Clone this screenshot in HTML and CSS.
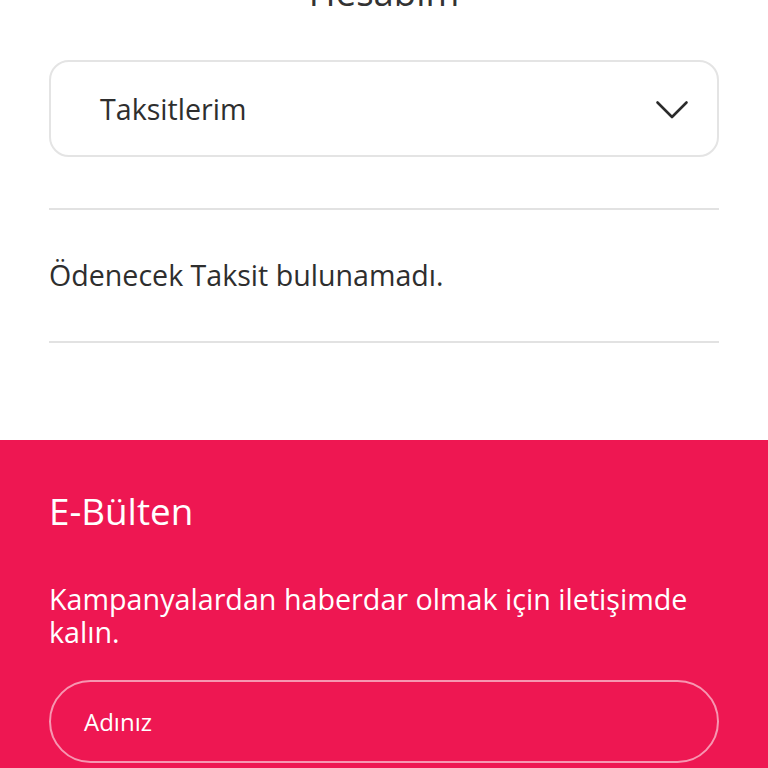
FILE: index.html
```html
<!DOCTYPE html>
<html lang="tr">
<head>
<meta charset="utf-8">
<title>Hesabım</title>
<link rel="stylesheet" href="styles.css">
</head>
<body>
<main class="account">
  <h1 class="title">Hesabım</h1>
  <div class="select">
    <span class="select-label">Taksitlerim</span>
    <svg class="chevron" width="34" height="20" viewBox="0 0 34 20" aria-hidden="true">
      <path d="M2.5 2.5 L17 17 L31.5 2.5" fill="none" stroke="#2b2b2b" stroke-width="2.6" stroke-linecap="round" stroke-linejoin="round"/>
    </svg>
  </div>
  <div class="message">Ödenecek Taksit bulunamadı.</div>
</main>
<footer class="newsletter">
  <h2 class="nl-title">E-Bülten</h2>
  <p class="nl-text">Kampanyalardan haberdar olmak için iletişimde kalın.</p>
  <div class="nl-input">Adınız</div>
</footer>
</body>
</html>
```
FILE: styles.css
```css
html, body {
  margin: 0;
  padding: 0;
  background: #ffffff;
  overflow: hidden;
}
body {
  font-family: "Open Sans", "Noto Sans", "DejaVu Sans", sans-serif;
  color: #2e2e2e;
  width: 768px;
}
.account {
  padding: 0 49px;
}
.title {
  margin: -32px 0 0;
  height: 49px;
  font-size: 36.5px;
  line-height: 49px;
  font-weight: 400;
  text-align: center;
  color: #333333;
}
.select {
  margin-top: 43px;
  height: 97px;
  box-sizing: border-box;
  border: 2px solid #e4e4e4;
  border-radius: 20px;
  display: flex;
  align-items: center;
  justify-content: space-between;
  padding: 0 28px 0 49px;
}
.select-label {
  font-size: 28.6px;
  line-height: 38px;
}
.chevron {
  display: block;
  margin-top: 2px;
}
.message {
  margin-top: 51px;
  border-top: 2px solid #e2e2e2;
  border-bottom: 2px solid #e2e2e2;
  padding: 46px 0 47px;
  font-size: 28.6px;
  line-height: 38px;
}
.newsletter {
  margin-top: 97px;
  background: #ee1752;
  color: #ffffff;
  padding: 47px 49px 40px;
}
.nl-title {
  margin: 0;
  font-size: 36.8px;
  line-height: 49px;
  font-weight: 400;
}
.nl-text {
  margin: 46px 0 0;
  font-size: 28.7px;
  line-height: 33px;
}
.nl-input {
  margin-top: 32px;
  height: 83px;
  box-sizing: border-box;
  border: 2px solid rgba(255, 255, 255, 0.55);
  border-radius: 42px;
  display: flex;
  align-items: center;
  padding: 0 33px;
  font-size: 24px;
}
```
